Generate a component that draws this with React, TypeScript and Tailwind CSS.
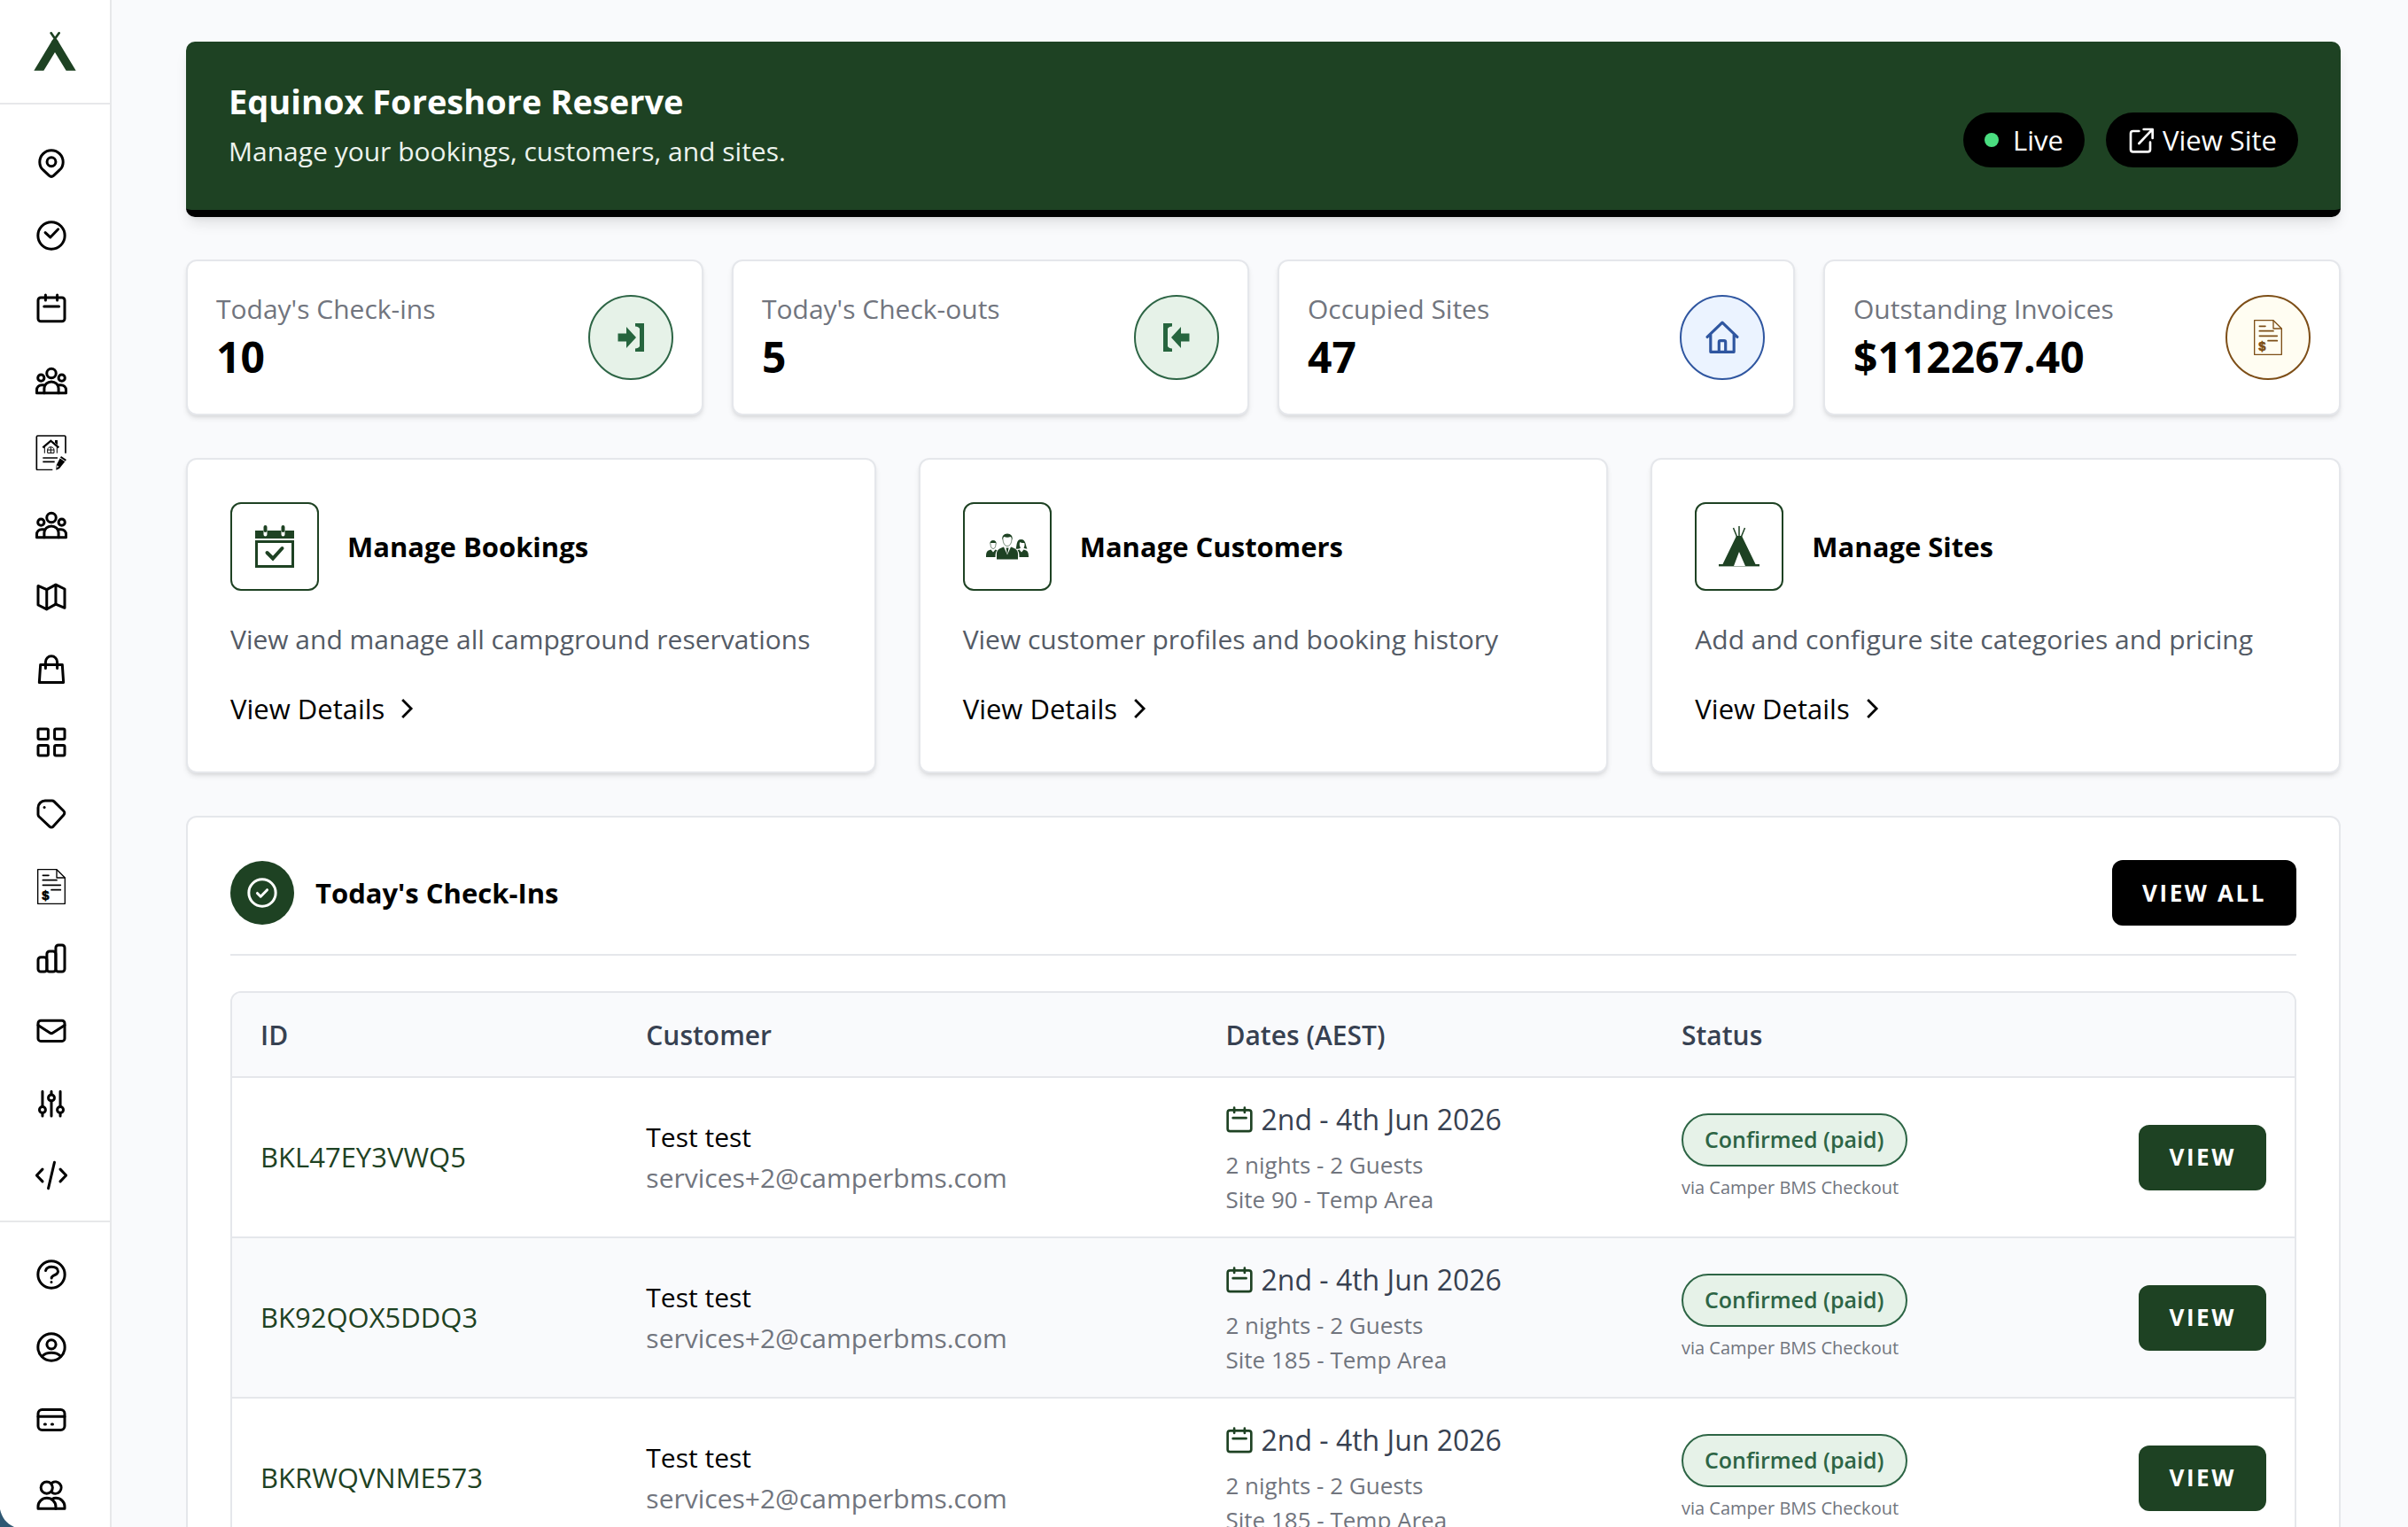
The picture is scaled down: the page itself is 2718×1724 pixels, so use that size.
import React from "react";

type IconProps = { className?: string };

function Stroke({ className = "size-9", children }: IconProps & { children: React.ReactNode }) {
  return (
    <svg
      viewBox="0 0 24 24"
      fill="none"
      stroke="currentColor"
      strokeWidth="2"
      strokeLinecap="round"
      strokeLinejoin="round"
      className={className}
      aria-hidden="true"
    >
      {children}
    </svg>
  );
}

const PinIcon = () => (
  <Stroke>
    <path d="M3.2 10.6a8.8 8.8 0 1 1 17.6 0c0 2.6-1.1 4.7-2.8 6.2l-4.2 4a2.7 2.7 0 0 1-3.6 0l-4.2-4c-1.7-1.5-2.8-3.6-2.8-6.2z" />
    <circle cx="12" cy="10.5" r="3.3" />
  </Stroke>
);

const CheckCircleIcon = () => (
  <Stroke>
    <circle cx="12" cy="12" r="10.1" />
    <path d="M7.4 9.7l3.8 3.6 5.9-6.1" />
  </Stroke>
);

const CalendarIcon = ({ className }: IconProps) => (
  <Stroke className={className}>
    <rect x="2" y="4" width="20" height="17.8" rx="2" />
    <path d="M7.6 2v4M16.4 2v4M6.5 10.6h11.2" />
  </Stroke>
);

const GroupIcon = () => (
  <Stroke>
    <circle cx="12" cy="6.3" r="3.5" />
    <circle cx="4.2" cy="9.8" r="2.4" />
    <circle cx="19.8" cy="9.8" r="2.4" />
    <path d="M6.6 21.1v-3.4c0-2.8 2.4-5 5.4-5s5.4 2.2 5.4 5v3.4z" />
    <path d="M6.6 21.1H1v-2.3a3.7 3.7 0 0 1 3.7-3.7h1.6M17.4 21.1H23v-2.3a3.7 3.7 0 0 0-3.7-3.7h-1.6" />
  </Stroke>
);

const AgreementIcon = () => (
  <svg viewBox="0 0 120 120" fill="none" stroke="currentColor" className="size-10" aria-hidden="true">
    <path d="M108 62V7a4 4 0 0 0-4-4H14a4 4 0 0 0-4 4v108a4 4 0 0 0 4 4h50" strokeWidth="5" />
    <path d="M31 43L58 20l27 23" strokeWidth="7" />
    <path d="M72 18h9v16l-9-8z" fill="currentColor" stroke="none" />
    <path d="M37 42v20M79 42v20" strokeWidth="3" />
    <path d="M47 61V51c0-6 5-10 11-10s11 4 11 10v10zM58 41v20M47 51h22" strokeWidth="3" />
    <path d="M31 78h50M31 91h40" strokeWidth="5" />
    <path d="M93 72l18 12-24 30-11 5 1-17z" fill="currentColor" stroke="none" />
    <path d="M88 77l19 13" stroke="#fff" strokeWidth="3" />
    <path d="M79 103l6 4-6 5z" fill="#fff" stroke="none" />
  </svg>
);

const MapIcon = () => (
  <Stroke>
    <path d="M2 3.6l6.5 2.8 6.8-3.6L22 6v14.2l-6.7-2.8-6.8 3.8L2 18z" />
    <path d="M8.5 6.4v14.8M15.3 2.8v14.6" />
  </Stroke>
);

const BagIcon = () => (
  <Stroke>
    <path d="M3.8 8.3h16.4l.9 13.3H2.9z" />
    <path d="M7.6 11V6.3a4.4 4.4 0 0 1 8.8 0V11" />
  </Stroke>
);

const GridIcon = () => (
  <Stroke>
    <rect x="2" y="2" width="7.6" height="7.6" rx="1" />
    <rect x="14.4" y="2" width="7.6" height="7.6" rx="1" />
    <rect x="2" y="14.4" width="7.6" height="7.6" rx="1" />
    <rect x="14.4" y="14.4" width="7.6" height="7.6" rx="1" />
  </Stroke>
);

const TagIcon = () => (
  <Stroke>
    <path d="M2 7.3A5.3 5.3 0 0 1 7.3 2h5.3a2 2 0 0 1 1.4.6l7.3 7.2a2 2 0 0 1 0 2.8l-7.9 8.8a2 2 0 0 1-2.8 0L2.7 14a2 2 0 0 1-.7-1.5z" />
    <path d="M6.7 7h.01" />
  </Stroke>
);

const InvoiceIcon = () => (
  <svg viewBox="0 0 120 120" fill="none" stroke="currentColor" className="size-10" aria-hidden="true">
    <path d="M14 2h64l28 28v88H14z" strokeWidth="4" strokeLinejoin="round" />
    <path d="M78 2v28h28" strokeWidth="4" strokeLinejoin="round" />
    <path d="M31 22h20M31 38h47M31 55h60M60 71h31" strokeWidth="5" strokeLinecap="round" />
    <text x="28" y="104" fill="currentColor" strokeWidth="2" fontFamily="Liberation Sans" fontWeight="700" fontSize="44">
      $
    </text>
  </svg>
);

const StatsIcon = () => (
  <Stroke>
    <rect x="2" y="11.2" width="6.6" height="10.8" rx="2" />
    <rect x="8.6" y="6.6" width="6.7" height="15.4" rx="2" />
    <rect x="15.3" y="2" width="6.7" height="20" rx="2" />
  </Stroke>
);

const MailIcon = () => (
  <Stroke>
    <rect x="2" y="4.2" width="20" height="15.4" rx="2" />
    <path d="M2 7.6l8.8 5.8a2.2 2.2 0 0 0 2.4 0L22 7.6" />
  </Stroke>
);

const SlidersIcon = () => (
  <Stroke>
    <path d="M5.3 2.8v11.4M5.3 19v2.4M12 2.8v2.4M12 10v11.4M18.7 2.8v11.4M18.7 19v2.4" />
    <circle cx="5.3" cy="16.6" r="2.3" />
    <circle cx="12" cy="7.6" r="2.3" />
    <circle cx="18.7" cy="16.6" r="2.3" />
  </Stroke>
);

const CodeIcon = () => (
  <Stroke>
    <path d="M5.3 7.4L.9 12l4.4 4.6M18.7 7.4l4.4 4.6-4.4 4.6M14.3 2.2L9.7 21.8" />
  </Stroke>
);

const HelpIcon = () => (
  <Stroke>
    <circle cx="12" cy="12" r="10.1" />
    <path d="M7.7 9c.4-1.7 2.1-2.9 4.5-2.9 2.8 0 4.8 1.3 4.8 3.5 0 3-4.9 2.6-4.9 5M12 17.7h.01" />
  </Stroke>
);

const ProfileIcon = () => (
  <Stroke>
    <circle cx="12" cy="12" r="10.1" />
    <circle cx="12" cy="9.9" r="3.4" />
    <path d="M5 18.8c1.600-1.600 4.200-2.600 7-2.600s5.400 1 7 2.600" />
  </Stroke>
);

const CardIcon = () => (
  <Stroke>
    <rect x="2" y="4.4" width="20" height="15.3" rx="3" />
    <path d="M2 9.5h20M6.9 15.4h.7M12.3 15.4h.7" />
  </Stroke>
);

const UsersIcon = () => (
  <svg
    viewBox="0 0 24 26"
    fill="none"
    stroke="currentColor"
    strokeWidth="2"
    strokeLinecap="round"
    strokeLinejoin="round"
    className="h-10 w-9"
    aria-hidden="true"
  >
    <g transform="translate(0 3)">
      <circle cx="8.5" cy="6.4" r="4.4" />
      <path d="M12.6 2.7a4.4 4.4 0 1 1 0 7.4" />
      <path d="M2 22.2v-1.6c0-3.5 3-6.4 6.6-6.4s6.7 2.9 6.7 6.4v1.600z" />
      <path d="M12.3 15c1-.5 2-.8 3.100-.8 3.600 0 6.600 2.900 6.600 6.400v1.600h-6.700" />
    </g>
  </svg>
);

const ExternalIcon = () => (
  <Stroke className="size-8">
    <path d="M10 4.5H5a2 2 0 0 0-2 2V20a2 2 0 0 0 2 2h12.500a2 2 0 0 0 2-2v-6" />
    <path d="M14 3h7.500v7.500M21 3.500L10 15" />
  </Stroke>
);

const CheckInIcon = () => (
  <svg viewBox="0 0 32 32" fill="currentColor" className="size-8" aria-hidden="true">
    <path d="M1.500 11.500H11V4l11 12-11 12v-7.500H1.500zM21 0h10v32H21v-3.500c2.500-.3 4-1 5-2.500V6c-1-1.500-2.500-2.200-5-2.500z" />
  </svg>
);

const CheckOutIcon = () => (
  <svg viewBox="0 0 32 32" fill="currentColor" className="size-8" aria-hidden="true">
    <path d="M30.500 11.500H21V4L10 16l11 12v-7.500h9.500zM11 0H1v32h10v-3.500c-2.500-.3-4-1-5-2.500V6c1-1.500 2.500-2.200 5-2.500z" />
  </svg>
);

const HomeIcon = () => (
  <svg
    viewBox="0 0 36 36"
    fill="none"
    stroke="currentColor"
    strokeWidth="3"
    strokeLinejoin="round"
    strokeLinecap="round"
    className="size-[38px]"
    aria-hidden="true"
  >
    <path d="M2 17.500L18 2l16 15.500M5.500 15v18.500h25V15" />
    <path d="M14.500 33V23a1.500 1.500 0 0 1 1.500-1.500h4a1.500 1.500 0 0 1 1.500 1.500v10" />
  </svg>
);

const BookingCheckIcon = () => (
  <svg viewBox="0 0 48 48" className="size-12" aria-hidden="true">
    <path d="M2 6h44v9H2z" fill="currentColor" />
    <path d="M3.500 18.500h41v28h-41z" fill="none" stroke="currentColor" strokeWidth="3" />
    <path d="M13.500 6v4.500M33.500 6v4.500" stroke="#fff" strokeWidth="4" strokeLinecap="round" />
    <path d="M13.500 2v4M33.500 2v4" stroke="currentColor" strokeWidth="4" strokeLinecap="round" />
    <path d="M15.500 31l6.500 6.500 10.500-11.500" fill="none" stroke="currentColor" strokeWidth="4" strokeLinecap="round" />
  </svg>
);

const CustomersIcon = () => (
  <svg viewBox="0 0 48 48" fill="currentColor" className="size-12" aria-hidden="true">
    <path d="M12 38.500v-6c0-4 2-6 8-8l4 9 4-9c6 2 8 4 8 8v6z" />
    <path d="M22.500 25.500h3l-1.500 8z" />
    <path d="M18.500 16.500c-1-4 1.500-7 5.500-7s6.500 3 5.500 7c-.5-1.500-1-3-2-3.500-2 1-5 1-7 0-1 .5-1.500 2-2 3.500z" />
    <path d="M19 15c0 5 2 8.500 5 8.500s5-3.500 5-8.500" fill="none" stroke="currentColor" strokeWidth=".6" />
    <path d="M0 36c0-6 1-7.500 5.500-8.500l2.500 3 2.500-3 2 .8c-1.500 1.500-2 3.500-2 7.700z" />
    <path d="M4.500 21.500c-.5-3 1-4.500 3.500-4.500s4 1.500 3.500 4.500L10.500 20h-5z" />
    <path d="M5 21c0 3 1 5.500 3 5.500s3-2.500 3-5.500" fill="none" stroke="currentColor" strokeWidth=".6" />
    <path d="M48 36c0-6-1-7.500-5.500-8.500l-2.500 3-2.500-3-2 .8c1.500 1.500 2 3.500 2 7.700z" />
    <path d="M33.500 26.500c1.500-2 0-10.500 6-10.500s5 8 7 10.500c-1.500.3-3 0-4-1 1-1.500 1.300-3.500.8-5.500-2 .3-4-.2-5-1-1 2-.5 4.500.7 6.500-1.500 1.200-3.500 1.500-5.500 1z" />
  </svg>
);

const TipiIcon = () => (
  <svg viewBox="0 0 48 48" fill="currentColor" className="size-12" aria-hidden="true">
    <path d="M21 12h6l16.500 34H31l-7-16-6 16H4.500z" />
    <path d="M24 1v12M17.500 3l4.500 11M30.500 3L26 14" stroke="currentColor" strokeWidth="1.500" fill="none" />
    <path d="M1 45h16M32 45h15" stroke="currentColor" strokeWidth="2" />
    <path d="M1 46.500h46" stroke="currentColor" strokeOpacity=".4" />
  </svg>
);

const LogoIcon = () => (
  <svg viewBox="0 0 144 132" className="h-11 w-12" aria-hidden="true">
    <path d="M1 131L62 30l10-11 10 11 61 101h-33L72 69l-38 62z" fill="#1e4223" />
    <path d="M59 4l20 29M86 4L65 33" stroke="#1e4223" strokeWidth="8" strokeLinecap="round" />
  </svg>
);

const primaryNav: [string, React.ReactNode][] = [
  ["Location", <PinIcon />],
  ["Check-ins", <CheckCircleIcon />],
  ["Calendar", <CalendarIcon />],
  ["Customers", <GroupIcon />],
  ["Agreements", <AgreementIcon />],
  ["Guests", <GroupIcon />],
  ["Map", <MapIcon />],
  ["Shop", <BagIcon />],
  ["Categories", <GridIcon />],
  ["Discounts", <TagIcon />],
  ["Invoices", <InvoiceIcon />],
  ["Reports", <StatsIcon />],
  ["Messages", <MailIcon />],
  ["Settings", <SlidersIcon />],
  ["Developer", <CodeIcon />],
];

const secondaryNav: [string, React.ReactNode][] = [
  ["Help", <HelpIcon />],
  ["Profile", <ProfileIcon />],
  ["Billing", <CardIcon />],
  ["Team", <UsersIcon />],
];

function NavLinks({ items }: { items: [string, React.ReactNode][] }) {
  return (
    <>
      {items.map(([label, icon]) => (
        <li key={label} className="flex-1">
          <a href="#" aria-label={label} className="flex h-full items-center justify-center pr-2">
            {icon}
          </a>
        </li>
      ))}
    </>
  );
}

const stats = [
  { label: "Today's Check-ins", value: "10", icon: <CheckInIcon />, tone: "border-[#2d6545] bg-[#e6f2e8] text-[#26653e]" },
  { label: "Today's Check-outs", value: "5", icon: <CheckOutIcon />, tone: "border-[#2d6545] bg-[#e6f2e8] text-[#26653e]" },
  { label: "Occupied Sites", value: "47", icon: <HomeIcon />, tone: "border-[#2f56a0] bg-[#ebf3ff] text-[#2f56a0]" },
  { label: "Outstanding Invoices", value: "$112267.40", icon: <InvoiceIcon />, tone: "border-[#7d4e17] bg-[#fffdf2] text-[#7d4e17]" },
];

const features = [
  { title: "Manage Bookings", text: "View and manage all campground reservations", icon: <BookingCheckIcon /> },
  { title: "Manage Customers", text: "View customer profiles and booking history", icon: <CustomersIcon /> },
  { title: "Manage Sites", text: "Add and configure site categories and pricing", icon: <TipiIcon /> },
];

const bookings = [
  { id: "BKL47EY3VWQ5", site: "Site 90 - Temp Area" },
  { id: "BK92QOX5DDQ3", site: "Site 185 - Temp Area" },
  { id: "BKRWQVNME573", site: "Site 185 - Temp Area" },
];

export default function App() {
  return (
    <div className="relative flex h-screen overflow-hidden bg-[#f9fafc] font-['Open_Sans',sans-serif] text-[30px] text-black">
      <aside className="w-[126px] shrink-0 overflow-hidden border-r-2 border-[#e7e8ea] bg-white">
        <a href="#" aria-label="Home" className="flex h-[118px] items-center justify-center border-b-2 border-[#e7e8ea]">
          <LogoIcon />
        </a>
        <nav aria-label="Main">
          <ul className="flex h-[1262px] flex-col border-b-2 border-[#e7e8ea] pt-[26px] pb-[10px]">
            <NavLinks items={primaryNav} />
          </ul>
          <ul className="flex h-[346px] flex-col pt-[18px]">
            <NavLinks items={secondaryNav} />
          </ul>
        </nav>
      </aside>

      <main className="flex min-w-0 flex-1 flex-col gap-12 pt-[47px] pr-[76px] pl-[84px]">
        <header className="flex shrink-0 items-end justify-between rounded-[10px] border-b-8 border-black bg-[#1e4223] px-12 pt-12 pb-12 text-white shadow-lg">
          <div className="flex flex-col gap-5">
            <h1 className="text-[38px] leading-[38px] font-bold">Equinox Foreshore Reserve</h1>
            <p className="leading-9 text-[#edf3ee]">Manage your bookings, customers, and sites.</p>
          </div>
          <div className="flex gap-6 text-[31px]">
            <span className="flex h-[62px] items-center gap-4 rounded-full bg-black px-6">
              <span className="size-4 rounded-full bg-[#4ade80]" />
              Live
            </span>
            <a href="#" className="flex h-[62px] items-center gap-2 rounded-full bg-black px-6">
              <ExternalIcon />
              View Site
            </a>
          </div>
        </header>

        <section aria-label="Summary" className="grid shrink-0 grid-cols-4 gap-8">
          {stats.map((s) => (
            <div key={s.label} className="flex items-center justify-between rounded-xl border-2 border-[#e5e7eb] bg-white p-8 shadow-md">
              <div>
                <p className="leading-[44px] text-[#71757e]">{s.label}</p>
                <p className="text-5xl leading-[64px] font-bold">{s.value}</p>
              </div>
              <div className={`flex size-24 items-center justify-center rounded-full border-2 ${s.tone}`}>{s.icon}</div>
            </div>
          ))}
        </section>

        <section aria-label="Manage" className="grid shrink-0 grid-cols-3 gap-12">
          {features.map((f) => (
            <article key={f.title} className="rounded-xl border-2 border-[#e5e7eb] bg-white p-12 shadow-md">
              <div className="flex items-center gap-8">
                <div className="flex size-[100px] items-center justify-center rounded-xl border-2 border-[#1e4223] text-[#1e4223]">{f.icon}</div>
                <h2 className="text-[31px] leading-[46px] font-bold">{f.title}</h2>
              </div>
              <p className="mt-8 leading-[46px] text-[#545b66]">{f.text}</p>
              <a href="#" className="mt-8 inline-flex items-center gap-3 text-[31px] leading-[46px]">
                View Details
                <svg viewBox="0 0 24 24" fill="none" stroke="currentColor" strokeWidth="2.400" className="size-7" aria-hidden="true">
                  <path d="M7 3.500l8.500 8.500L7 20.500" />
                </svg>
              </a>
            </article>
          ))}
        </section>

        <section aria-labelledby="checkins" className="shrink-0 rounded-xl border-2 border-[#e5e7eb] bg-white p-12">
          <div className="flex items-center justify-between border-b-2 border-[#e5e7eb] pb-8">
            <div className="flex items-center gap-6">
              <span className="flex size-[72px] items-center justify-center rounded-full bg-[#1e4223] text-white">
                <Stroke>
                  <circle cx="12" cy="12" r="10.1" />
                  <path d="M8.300 12.300l2.500 2.500 4.900-5" />
                </Stroke>
              </span>
              <h2 id="checkins" className="text-[31px] leading-[46px] font-bold">
                Today's Check-Ins
              </h2>
            </div>
            <button type="button" className="h-[74px] rounded-xl bg-black px-[34px] text-[26px] font-bold tracking-widest text-white">
              VIEW ALL
            </button>
          </div>

          <div className="mt-10 overflow-hidden rounded-xl border-2 border-[#e5e7eb]">
            <table className="w-full table-fixed border-separate border-spacing-0 text-left">
              <thead className="bg-[#f9fafc] text-[#374151]">
                <tr>
                  <th className="h-24 w-[18.7%] border-b-2 border-[#e5e7eb] px-8 font-semibold">ID</th>
                  <th className="w-[28.1%] border-b-2 border-[#e5e7eb] px-8 font-semibold">Customer</th>
                  <th className="w-[22.1%] border-b-2 border-[#e5e7eb] px-8 font-semibold">Dates (AEST)</th>
                  <th className="border-b-2 border-[#e5e7eb] px-8 font-semibold">Status</th>
                  <th aria-label="Actions" className="border-b-2 border-[#e5e7eb] px-8" />
                </tr>
              </thead>
              <tbody>
                {bookings.map((b) => (
                  <tr key={b.id} className="even:bg-[#f9fafc]">
                    <td className="h-[181px] border-b-2 border-[#e5e7eb] px-8 text-[31px] text-[#1e4223]">{b.id}</td>
                    <td className="border-b-2 border-[#e5e7eb] px-8 leading-[46px]">
                      <p>Test test</p>
                      <p className="text-[#71757e]">services+2@camperbms.com</p>
                    </td>
                    <td className="border-b-2 border-[#e5e7eb] px-8">
                      <p className="flex items-center gap-2 text-[32px] leading-[48px] text-[#374151]">
                        <CalendarIcon className="size-8 text-[#1e4223]" />
                        2nd - 4th Jun 2026
                      </p>
                      <p className="mt-2 text-[26px] leading-[39px] text-[#71757e]">2 nights - 2 Guests</p>
                      <p className="text-[26px] leading-[39px] text-[#71757e]">{b.site}</p>
                    </td>
                    <td className="border-b-2 border-[#e5e7eb] px-8">
                      <p className="flex">
                        <span className="flex h-[60px] items-center rounded-full border-2 border-[#2d6545] bg-[#e6f2e8] px-6 text-[25px] font-semibold text-[#2d6545]">
                          Confirmed (paid)
                        </span>
                      </p>
                      <p className="mt-2 text-xl leading-8 text-[#71757e]">via Camper BMS Checkout</p>
                    </td>
                    <td className="border-b-2 border-[#e5e7eb] px-8 text-right">
                      <button type="button" className="h-[74px] rounded-xl bg-[#1e4223] px-[34px] text-[26px] font-bold tracking-widest text-white">
                        VIEW
                      </button>
                    </td>
                  </tr>
                ))}
              </tbody>
            </table>
          </div>
        </section>
      </main>

      <svg viewBox="0 0 20 20" className="absolute bottom-0 left-0 size-5" aria-hidden="true">
        <path d="M0 0c2 9 7 16 16 20H0z" fill="#2f5873" />
      </svg>
    </div>
  );
}
